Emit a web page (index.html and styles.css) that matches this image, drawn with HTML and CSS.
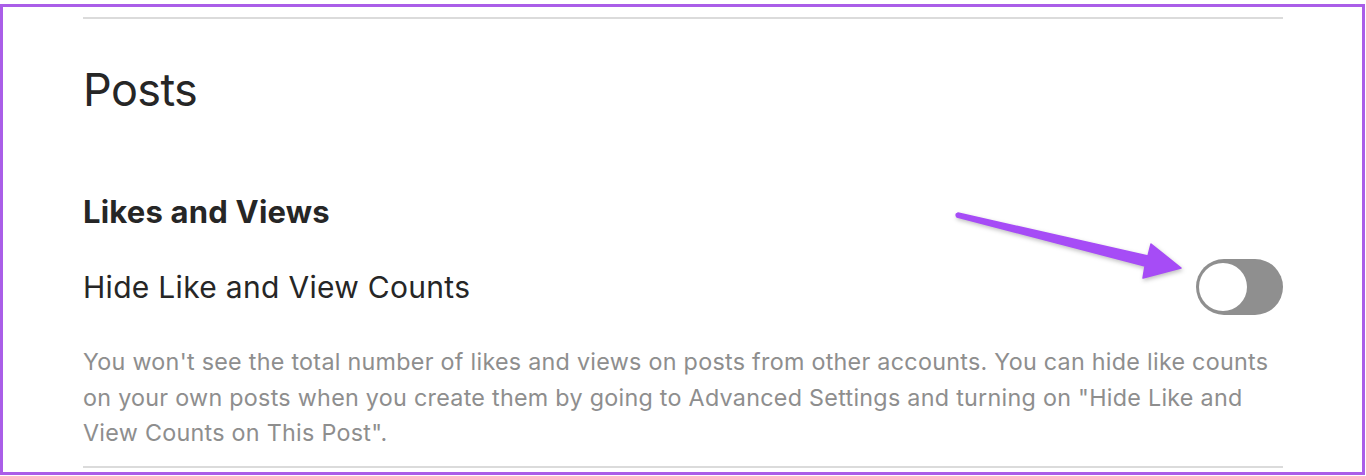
FILE: index.html
```html
<!DOCTYPE html>
<html lang="en">
<head>
    <meta charset="UTF-8">
    <meta name="viewport" content="width=device-width, initial-scale=1.0">
    <title>Posts Settings</title>
    <link rel="stylesheet" href="styles.css">
</head>
<body>
    <div class="frame">
        <section class="settings">
            <div class="divider"></div>

            <h1 class="page-title">Posts</h1>

            <h2 class="group-title">Likes and Views</h2>

            <div class="setting-row">
                <span class="setting-label">Hide Like and View Counts</span>
                <label class="switch">
                    <input type="checkbox">
                    <span class="slider"></span>
                </label>
            </div>

            <p class="setting-help">You won't see the total number of likes and views on posts from other accounts. You can hide like counts on your own posts when you create them by going to Advanced Settings and turning on "Hide Like and View Counts on This Post".</p>

            <div class="divider"></div>
        </section>

        <!-- annotation arrow pointing at the toggle -->
        <svg class="arrow" width="240" height="90" viewBox="0 0 240 90">
            <polygon points="8,8 198,51 201,39 231,63 193,73 195,61 7,12" fill="#a64cf6" stroke="#a64cf6" stroke-width="1.5" stroke-linejoin="round"/>
            <circle cx="7.5" cy="10" r="2.2" fill="#a64cf6"/>
        </svg>
    </div>
</body>
</html>
```

FILE: styles.css
```css
* {
    margin: 0;
    padding: 0;
    box-sizing: border-box;
}

body {
    background-color: #fff;
    font-family: Inter, 'Noto Sans', sans-serif;
    color: #262626;
}

.frame {
    position: relative;
    height: 471px;
    margin: 4px 1px 1px 0;
    border: 3px solid #aa5ee8;
    padding: 10px 79px 0 80px;
}

.divider {
    height: 2px;
    background-color: #dbdbdb;
}

.page-title {
    margin-top: 43px;
    font-size: 45px;
    line-height: 56px;
    font-weight: 400;
    letter-spacing: -0.6px;
}

.group-title {
    margin-top: 75px;
    font-size: 31px;
    line-height: 38px;
    font-weight: 700;
    letter-spacing: 0.2px;
}

.setting-row {
    display: flex;
    align-items: center;
    justify-content: space-between;
    margin-top: 28px;
    height: 56px;
}

.setting-label {
    font-size: 30px;
    line-height: 36px;
    letter-spacing: 0.3px;
}

.switch {
    position: relative;
    display: inline-block;
    width: 87px;
    height: 56px;
}

.switch input {
    opacity: 0;
    width: 0;
    height: 0;
}

.slider {
    position: absolute;
    inset: 0;
    background-color: #8f8f8f;
    border-radius: 28px;
    cursor: pointer;
}

.slider::before {
    content: "";
    position: absolute;
    left: 3px;
    top: 4px;
    width: 48px;
    height: 48px;
    background-color: #fff;
    border-radius: 50%;
}

.setting-help {
    margin-top: 29px;
    font-size: 23.3px;
    line-height: 35.5px;
    letter-spacing: 0.28px;
    color: #8e8e8e;
}

.setting-help + .divider {
    margin-top: 15px;
}

.arrow {
    position: absolute;
    left: 947px;
    top: 198px;
    filter: drop-shadow(1px 2px 2px rgba(0, 0, 0, 0.25));
}
```
